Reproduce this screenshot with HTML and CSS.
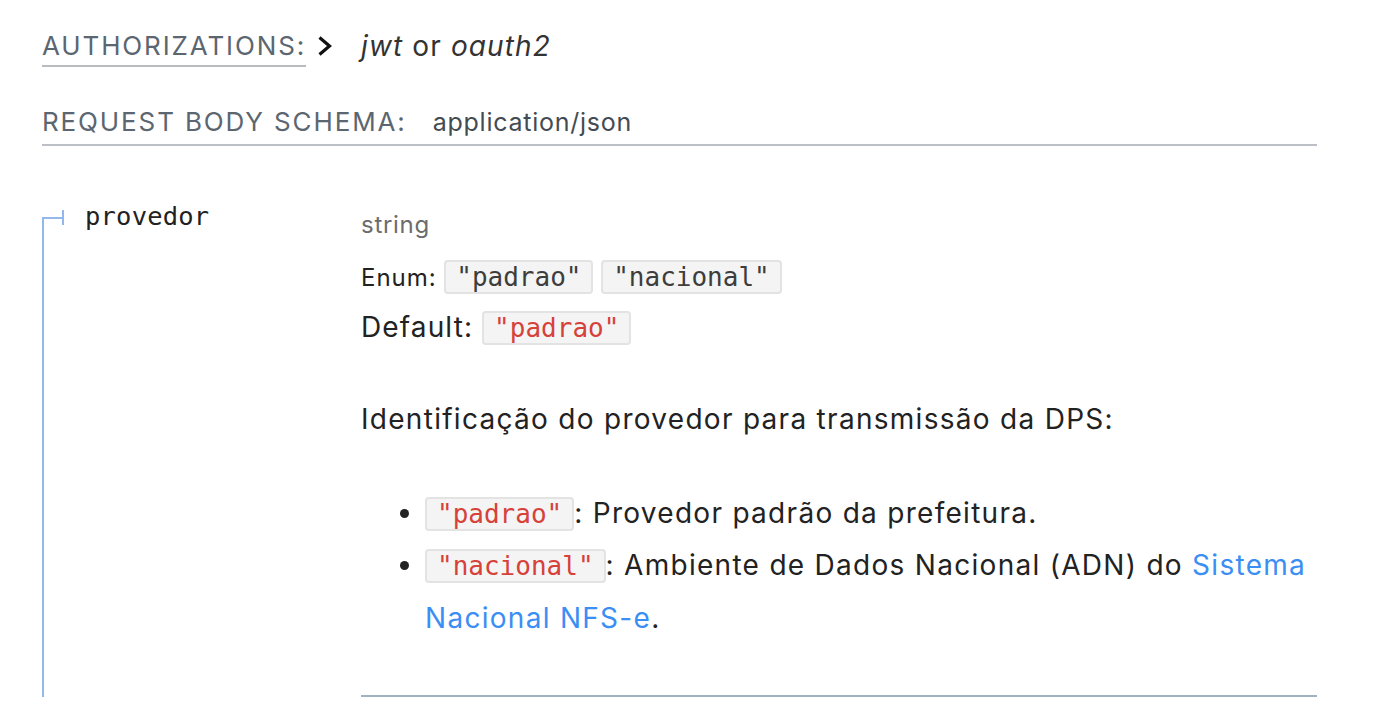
FILE: index.html
```html
<!DOCTYPE html>
<html lang="pt">
<head>
<meta charset="utf-8">
<link rel="stylesheet" href="styles.css">
</head>
<body>
<div class="page">
  <div class="auth">
    <span class="auth-label">AUTHORIZATIONS:</span>
    <svg class="chev" width="16" height="22" viewBox="0 0 16 22"><path d="M2.5 2.5 L12.5 11 L2.5 19.5" fill="none" stroke="#111" stroke-width="3.2"/></svg>
    <span class="auth-val"><i>jwt</i> or <i>oauth2</i></span>
  </div>
  <div class="schema-head">
    <span class="schema-label">REQUEST BODY SCHEMA:</span>
    <span class="schema-type">application/json</span>
  </div>
  <div class="prop">
    <div class="prop-name">
      <span class="tick"><span class="tick-h"></span><span class="tick-v"></span></span>
      <span class="name">provedor</span>
    </div>
    <div class="prop-detail">
      <div class="type">string</div>
      <div class="enum">Enum: <code class="pill">"padrao"</code> <code class="pill">"nacional"</code></div>
      <div class="default">Default: <code class="pill red">"padrao"</code></div>
      <p class="desc">Identificação do provedor para transmissão da DPS:</p>
      <ul class="list">
        <li><code class="pill red">"padrao"</code>: Provedor padrão da prefeitura.</li>
        <li><code class="pill red">"nacional"</code>: Ambiente de Dados Nacional (ADN) do <a href="#">Sistema Nacional NFS-e</a>.</li>
      </ul>
    </div>
  </div>
</div>
</body>
</html>
```
FILE: styles.css
```css
html, body {
  margin: 0;
  padding: 0;
  background: #fff;
}
body {
  font-family: Inter, "Noto Sans", sans-serif;
  color: #333;
}
.page {
  width: 1275px;
  padding: 0 0 0 42px;
}
.auth {
  display: flex;
  align-items: center;
  height: 44px;
  margin-top: 24px;
}
.auth-label {
  font-size: 26px;
  color: #5c6670;
  border-bottom: 2px solid #b7bcc1;
  line-height: 38px;
  margin-top: 2px;
  letter-spacing: 0.072em;
}
.chev {
  margin-left: 11px;
  margin-right: 28px;
}
.auth-val {
  font-size: 28px;
  color: #333;
  letter-spacing: 0.04em;
}
.schema-head {
  margin-top: 36px;
  border-bottom: 2px solid #bcc0c4;
  padding-bottom: 4px;
  display: flex;
  align-items: baseline;
  line-height: 36px;
}
.schema-label {
  font-size: 26px;
  color: #5c6670;
  letter-spacing: 0.072em;
}
.schema-type {
  font-size: 25px;
  color: #444b52;
  margin-left: 26px;
  letter-spacing: 0.03em;
}
.prop {
  display: grid;
  grid-template-columns: 319px 956px;
  margin-top: 52px;
}
.prop-name {
  position: relative;
  display: flex;
  align-items: flex-start;
  padding-top: 4px;
}
.prop-name::before {
  content: "";
  position: absolute;
  left: 0;
  top: 20px;
  bottom: -4px;
  width: 2px;
  background: #93b8ee;
}
.tick {
  display: flex;
  align-items: center;
  height: 15px;
  margin-top: 8px;
}
.tick-h {
  width: 20px;
  height: 2px;
  background: #93b8ee;
}
.tick-v {
  width: 2px;
  height: 15px;
  background: #93b8ee;
}
.name {
  font-family: "DejaVu Sans Mono", monospace;
  font-size: 25.5px;
  color: #222;
  margin-left: 21px;
  line-height: 28px;
  letter-spacing: 0.2px;
}
.prop-detail {
  padding-top: 12px;
  border-bottom: 2px solid #9fb4be;
  padding-bottom: 51px;
}
.type {
  font-size: 24px;
  color: #6c6c6c;
  line-height: 30px;
  letter-spacing: 0.03em;
}
.enum {
  font-size: 24px;
  color: #222;
  margin-top: 20px;
  line-height: 34px;
  letter-spacing: 0.04em;
}
.pill {
  font-family: "DejaVu Sans Mono", monospace;
  font-size: 26px;
  letter-spacing: 0;
  background: #f4f4f4;
  border: 2px solid #e3e3e3;
  border-radius: 4px;
  padding: 0 10px;
  color: #3d3d3d;
}
.pill.red {
  color: #d6413a;
}
.default {
  font-size: 28px;
  color: #222;
  margin-top: 14px;
  line-height: 36px;
  letter-spacing: 0.04em;
}
.desc {
  font-size: 28px;
  color: #222;
  margin: 53px 0 0 0;
  line-height: 40px;
  letter-spacing: 0.046em;
}
.list {
  margin: 48px 0 0 0;
  padding-left: 64px;
  font-size: 28px;
  color: #222;
  line-height: 52px;
  letter-spacing: 0.046em;
}
.list li + li {
  margin-top: -1px;
}
.list a {
  color: #3b8ef4;
  text-decoration: none;
}
```
